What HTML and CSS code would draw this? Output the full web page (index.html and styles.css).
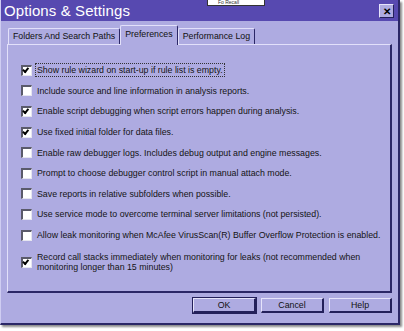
FILE: index.html
```html
<!DOCTYPE html>
<html>
<head>
<meta charset="utf-8">
<link rel="stylesheet" href="styles.css">
</head>
<body>
<div class="window">
  <div class="titlebar">
    <span class="title">Options &amp; Settings</span>
    <span class="close">&#x2715;</span>
  </div>
  <div class="tabs">
    <div class="tab">Folders And Search Paths</div>
    <div class="tab active">Preferences</div>
    <div class="tab">Performance Log</div>
  </div>
  <div class="panel">
    <div class="row"><span class="cb on"></span><span class="lbl focus">Show rule wizard on start-up if rule list is empty.</span></div>
    <div class="row"><span class="cb"></span><span class="lbl">Include source and line information in analysis reports.</span></div>
    <div class="row"><span class="cb on"></span><span class="lbl">Enable script debugging when script errors happen during analysis.</span></div>
    <div class="row"><span class="cb on"></span><span class="lbl">Use fixed initial folder for data files.</span></div>
    <div class="row"><span class="cb"></span><span class="lbl">Enable raw debugger logs. Includes debug output and engine messages.</span></div>
    <div class="row"><span class="cb"></span><span class="lbl">Prompt to choose debugger control script in manual attach mode.</span></div>
    <div class="row"><span class="cb"></span><span class="lbl">Save reports in relative subfolders when possible.</span></div>
    <div class="row"><span class="cb"></span><span class="lbl">Use service mode to overcome terminal server limitations (not persisted).</span></div>
    <div class="row"><span class="cb"></span><span class="lbl">Allow leak monitoring when McAfee VirusScan(R) Buffer Overflow Protection is enabled.</span></div>
    <div class="row two"><span class="cb on"></span><span class="lbl">Record call stacks immediately when monitoring for leaks (not recommended when<br>monitoring longer than 15 minutes)</span></div>
  </div>
  <div class="buttons">
    <div class="btn default">OK</div>
    <div class="btn">Cancel</div>
    <div class="btn">Help</div>
  </div>
</div>
<div class="behind">Fo Recall</div>
</body>
</html>
```
FILE: styles.css
```css
html, body {
  margin: 0;
  padding: 0;
  background: #ffffff;
}
body {
  width: 404px;
  height: 331px;
  overflow: hidden;
  position: relative;
  font-family: Tahoma, "Liberation Sans", Arial, sans-serif;
}
.window {
  width: 400px;
  height: 325px;
  box-sizing: border-box;
  background: #aeabe1;
  border-left: 1px solid #cfcdf2;
  border-right: 2px solid #2b2766;
  border-bottom: 2px solid #2b2766;
  box-shadow: 2px 2px 2px #8a8a8a;
  display: flex;
  flex-direction: column;
}
.titlebar {
  height: 21px;
  background: #5749b0;
  display: flex;
  align-items: center;
  justify-content: space-between;
  padding: 0 4px 0 3px;
}
.title {
  color: #ffffff;
  font-size: 15px;
  letter-spacing: 0.1px;
}
.close {
  width: 13px;
  height: 12px;
  background: #aeabe1;
  border-top: 1px solid #e6e4fb;
  border-left: 1px solid #e6e4fb;
  border-right: 1px solid #23205a;
  border-bottom: 1px solid #23205a;
  display: flex;
  align-items: center;
  justify-content: center;
  font-size: 10px;
  font-weight: bold;
  color: #000;
  margin-top: 1px;
}
.tabs {
  display: flex;
  align-items: flex-end;
  height: 23px;
  padding-left: 7px;
}
.tab {
  height: 16px;
  box-sizing: border-box;
  padding: 0 4px;
  font-size: 8.8px;
  line-height: 15px;
  color: #111;
  border-top: 1px solid #e2e0fa;
  border-left: 1px solid #e2e0fa;
  border-right: 1px solid #2b2766;
  border-radius: 2px 2px 0 0;
}
.tab.active {
  height: 20px;
  line-height: 17px;
  padding: 0 4px;
  position: relative;
  z-index: 1;
  margin-bottom: -1px;
  background: #aeabe1;
}
.panel {
  margin: 0 6px 0 6px;
  height: 249px;
  box-sizing: border-box;
  border-top: 1px solid #e2e0fa;
  border-left: 1px solid #e2e0fa;
  border-right: 2px solid #2b2766;
  border-bottom: 2px solid #2b2766;
  padding: 15px 0 0 13px;
  display: flex;
  flex-direction: column;
}
.row {
  height: 20.6px;
  display: flex;
  align-items: center;
  font-size: 8.8px;
  color: #141414;
}
.row.two {
  margin-top: 7px;
  height: 20px;
  line-height: 10px;
}
.cb {
  width: 11px;
  height: 11px;
  box-sizing: border-box;
  flex: none;
  background: #ffffff;
  border-top: 2px solid #5a5a6a;
  border-left: 2px solid #5a5a6a;
  border-right: 1px solid #e6e6f0;
  border-bottom: 1px solid #e6e6f0;
  margin-right: 4px;
  position: relative;
}
.cb.on::after {
  content: "";
  position: absolute;
  left: 1px;
  top: 0px;
  width: 2px;
  height: 4px;
  border-right: 2px solid #000;
  border-bottom: 2px solid #000;
  transform: rotate(40deg);
  transform-origin: 60% 40%;
}
.lbl {
  white-space: nowrap;
  padding: 1px 1px;
}
.lbl.focus {
  outline: 1px dotted #333;
}
.buttons {
  display: flex;
  justify-content: flex-end;
  gap: 5px;
  padding: 5px 6px 0 0;
}
.btn {
  width: 63px;
  height: 15px;
  box-sizing: border-box;
  font-size: 8.8px;
  line-height: 13px;
  text-align: center;
  color: #111;
  border-top: 1px solid #e6e4fb;
  border-left: 1px solid #e6e4fb;
  border-right: 2px solid #23205a;
  border-bottom: 2px solid #23205a;
}
.btn.default {
  outline: 1px solid #23205a;
  outline-offset: 0;
}
.behind {
  position: absolute;
  left: 207px;
  top: -1px;
  width: 58px;
  height: 7px;
  box-sizing: border-box;
  background: #fff;
  border: 1px solid #333;
  font-size: 5px;
  padding-left: 10px;
  line-height: 5px;
  color: #333;
}
```
